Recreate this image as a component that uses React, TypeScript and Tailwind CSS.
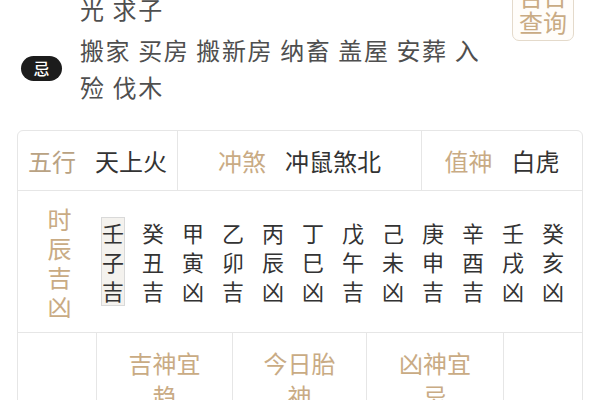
import React from "react";

const FONT = { fontFamily: '"Noto Sans CJK SC", "Noto Sans", sans-serif' };

const HOURS = [
  ["壬", "子", "吉"],
  ["癸", "丑", "吉"],
  ["甲", "寅", "凶"],
  ["乙", "卯", "吉"],
  ["丙", "辰", "凶"],
  ["丁", "巳", "凶"],
  ["戊", "午", "吉"],
  ["己", "未", "凶"],
  ["庚", "申", "吉"],
  ["辛", "酉", "吉"],
  ["壬", "戌", "凶"],
  ["癸", "亥", "凶"],
];

export default function App() {
  return (
    <div className="w-[600px] h-[400px] overflow-hidden bg-white" style={FONT}>
      {/* ── 宜 / 忌 ── */}
      <div className="flex -mt-[10px] pr-[26px]">
        <div className="flex-1 text-[24px] leading-[37px] tracking-[1.6px] text-[#4f4f4f]">
          <div className="flex">
            <div className="w-[80px] shrink-0" />
            <div>光 求子</div>
          </div>
          <div className="flex items-center mt-[4px]">
            <div className="w-[80px] shrink-0 flex pl-[21px]">
              <span className="w-[41px] h-[25px] rounded-full bg-[#1c1c1c] text-white text-[16px] leading-[25px] tracking-normal text-center font-medium">
                忌
              </span>
            </div>
            <div>
              <div>搬家 买房 搬新房 纳畜 盖屋 安葬 入</div>
              <div>殓 伐木</div>
            </div>
          </div>
        </div>
        <button className="self-start -mt-[13px] w-[62px] px-[6px] py-[5px] border border-[#e4dacb] rounded-[7px] text-[24px] leading-[26px] text-[#c9ab84] bg-[#fffdfa]">
          吉日
          <br />
          查询
        </button>
      </div>

      {/* ── Table ── */}
      <div className="mx-[17px] mt-[25px] border border-[#e6e6e6] rounded-[6px]">
        <div className="grid grid-cols-[160px_244px_1fr] h-[60px] border-b border-[#e6e6e6] text-[24px]">
          <div className="flex items-center justify-center gap-[19px] border-r border-[#e6e6e6]">
            <span className="text-[#b9a283]">五行</span>
            <span className="text-[#333333]">天上火</span>
          </div>
          <div className="flex items-center justify-center gap-[19px] border-r border-[#e6e6e6]">
            <span className="text-[#c9ab84]">冲煞</span>
            <span className="text-[#333333]">冲鼠煞北</span>
          </div>
          <div className="flex items-center justify-center gap-[19px]">
            <span className="text-[#c9ab84]">值神</span>
            <span className="text-[#333333]">白虎</span>
          </div>
        </div>

        <div className="flex items-center h-[142px] border-b border-[#e6e6e6]">
          <div className="w-[83px] flex flex-col items-center text-[24px] leading-[29px] text-[#c9ab84]">
            <span>时</span>
            <span>辰</span>
            <span>吉</span>
            <span>凶</span>
          </div>
          <div className="flex gap-[16px]">
            {HOURS.map((col, i) => (
              <div
                key={i}
                className={
                  i === 0
                    ? "w-[24px] flex flex-col items-center border border-[#d9d9d9] bg-[#f4f2ee] text-[22px] leading-[29px] text-[#333333]"
                    : "w-[24px] flex flex-col items-center border border-transparent text-[22px] leading-[29px] text-[#333333]"
                }
              >
                {col.map((c, j) => (
                  <span key={j}>{c}</span>
                ))}
              </div>
            ))}
          </div>
        </div>

        <div className="grid grid-cols-[79px_136px_134px_137px_1fr] h-[90px] text-[24px] leading-[33px] text-[#c9ab84]">
          <div className="border-r border-[#e6e6e6]" />
          <div className="border-r border-[#e6e6e6] px-[24px] pt-[13px] text-center">吉神宜趋</div>
          <div className="border-r border-[#e6e6e6] px-[24px] pt-[13px] text-center">今日胎神</div>
          <div className="border-r border-[#e6e6e6] px-[24px] pt-[13px] text-center">凶神宜忌</div>
          <div />
        </div>
      </div>
    </div>
  );
}
